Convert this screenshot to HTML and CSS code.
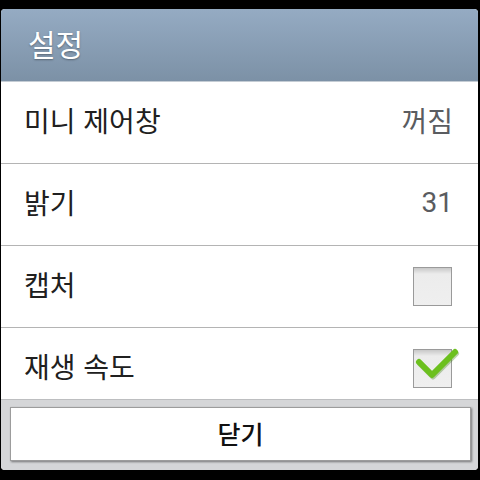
FILE: index.html
```html
<!DOCTYPE html>
<html lang="ko">
<head>
  <meta charset="UTF-8" />
  <title>설정</title>
  <link rel="stylesheet" href="styles.css">
</head>
<body>
  <div class="dialog">
    <div class="dialog-title">설정</div>
    <div class="list">
      <div class="row">
        <span class="label">미니 제어창</span>
        <span class="value">꺼짐</span>
      </div>
      <div class="row">
        <span class="label">밝기</span>
        <span class="value">31</span>
      </div>
      <div class="row">
        <span class="label">캡처</span>
        <span class="check"></span>
      </div>
      <div class="row">
        <span class="label">재생 속도</span>
        <span class="check">
          <svg class="tick" width="46" height="36" viewBox="0 0 46 36">
            <path d="M5 15 L18 28 L41 5" fill="none" stroke="#3f7d12" stroke-opacity="0.35" stroke-width="6" stroke-linecap="round" stroke-linejoin="round" transform="translate(1,1.5)"/>
            <path d="M5 15 L18 28 L41 5" fill="none" stroke="#6cc01e" stroke-width="6" stroke-linecap="round" stroke-linejoin="round"/>
          </svg>
        </span>
      </div>
    </div>
    <div class="footer">
      <button class="close-btn">닫기</button>
    </div>
  </div>
</body>
</html>
```

FILE: styles.css
```css
body {
  margin: 0;
  background: #000;
  font-family: "Noto Sans CJK KR", "Noto Sans", sans-serif;
  height: 480px;
  overflow: hidden;
}
.dialog {
  margin: 9px 2px 0 1px;
  border-radius: 4px;
  overflow: hidden;
  background: #fff;
}
.dialog-title {
  height: 72px;
  border-bottom: 1px solid #c4ccd4;
  background: linear-gradient(#95abc3, #7c91a6);
  color: #fff;
  font-size: 30px;
  line-height: 68px;
  padding-left: 27px;
  text-shadow: 0 1px 2px rgba(0,0,0,0.35);
}
.list {
  height: 317px;
  overflow: hidden;
}
.row {
  height: 81px;
  border-bottom: 1px solid #b4b4b4;
  display: flex;
  align-items: center;
  justify-content: space-between;
  padding: 0 25px 0 23px;
}
.label,
.value {
  font-size: 28px;
  margin-bottom: 5px;
}
.label {
  color: #202020;
}
.value {
  font-family: Roboto, "Noto Sans CJK KR", sans-serif;
  color: #5a5c60;
}
.check {
  position: relative;
  width: 37px;
  height: 37px;
  border: 1px solid #9a9a9a;
  background: linear-gradient(#c8c8c8, #ececec 6px, #efefef);
  margin-right: 1px;
}
.tick {
  position: absolute;
  left: 0;
  top: -3px;
}
.footer {
  height: 71px;
  background: #d5d6d8;
  border-top: 1px solid #bdbec0;
  padding: 7px 7px 0 9px;
  box-sizing: border-box;
}
.close-btn {
  width: 100%;
  height: 54px;
  background: #fff;
  border: 1px solid #9c9c9c;
  box-shadow: 1px 1px 2px rgba(0,0,0,0.45);
  font-family: "Noto Sans CJK KR", "Noto Sans", sans-serif;
  font-size: 25px;
  font-weight: 500;
  color: #111;
  padding: 0 0 3px;
}
```
